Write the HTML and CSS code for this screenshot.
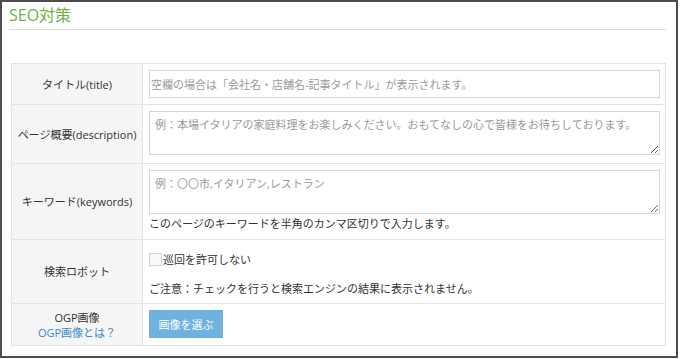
FILE: index.html
```html
<!DOCTYPE html>
<html lang="ja">
<head>
<meta charset="utf-8">
<title>SEO対策</title>
<link rel="stylesheet" href="styles.css">
</head>
<body>
<div class="frame">
  <h1 class="page-title">SEO対策</h1>
  <div class="form">
    <div class="label">タイトル(title)</div>
    <div class="field">
      <input class="text-input" type="text" placeholder="空欄の場合は「会社名・店舗名-記事タイトル」が表示されます。">
    </div>

    <div class="label">ページ概要(description)</div>
    <div class="field">
      <textarea class="textarea" placeholder="例：本場イタリアの家庭料理をお楽しみください。おもてなしの心で皆様をお待ちしております。"></textarea>
    </div>

    <div class="label">キーワード(keywords)</div>
    <div class="field">
      <textarea class="textarea" placeholder="例：〇〇市,イタリアン,レストラン"></textarea>
      <p class="help">このページのキーワードを半角のカンマ区切りで入力します。</p>
    </div>

    <div class="label">検索ロボット</div>
    <div class="field">
      <label class="check"><input class="checkbox" type="checkbox"><span>巡回を許可しない</span></label>
      <p class="note">ご注意：チェックを行うと検索エンジンの結果に表示されません。</p>
    </div>

    <div class="label label-stack">
      <span>OGP画像</span>
      <a class="link" href="#">OGP画像とは？</a>
    </div>
    <div class="field field-last">
      <button class="btn" type="button">画像を選ぶ</button>
    </div>
  </div>
</div>
</body>
</html>
```

FILE: styles.css
```css
html, body {
  margin: 0;
  padding: 0;
  background: #ffffff;
}

body {
  font-family: "Open Sans", "Noto Sans CJK JP", sans-serif;
  color: #333333;
}

.frame {
  box-sizing: border-box;
  width: 678px;
  height: 358px;
  border: 2px solid #4d4d4d;
  padding: 0 10px 0 7px;
  background: #ffffff;
}

.page-title {
  margin: 0;
  padding: 3px 0 4px 0;
  font-size: 16px;
  line-height: 20px;
  font-weight: 400;
  color: #6db33f;
  border-bottom: 1px solid #d5e7cb;
}

.form {
  margin: 33px 0 0 2px;
  display: grid;
  grid-template-columns: 131px 1fr;
  border-top: 1px solid #e3e3e3;
  border-left: 1px solid #e3e3e3;
  font-size: 11px;
}

.label,
.field {
  border-right: 1px solid #e3e3e3;
  border-bottom: 1px solid #e3e3e3;
}

.label {
  background: #f5f5f5;
  display: flex;
  flex-direction: column;
  align-items: center;
  justify-content: center;
  text-align: center;
  white-space: nowrap;
  line-height: 15px;
  color: #333333;
}

.field {
  padding: 6px 5px 6px 6px;
  background: #ffffff;
}

.field-last {
  padding-bottom: 7px;
}

.text-input,
.textarea {
  box-sizing: border-box;
  width: 100%;
  margin: 0;
  border: 1px solid #d6d6d6;
  background: #ffffff;
  font-family: "Open Sans", "Noto Sans CJK JP", sans-serif;
  font-size: 11px;
  color: #333333;
  display: block;
  outline: none;
}

.text-input {
  height: 28px;
  padding: 0 1px;
}

.textarea {
  height: 44px;
  padding: 4px 5px;
  line-height: 18px;
  margin-bottom: 2px;
}

.text-input::placeholder,
.textarea::placeholder {
  color: #9a9a9a;
  opacity: 1;
}

.help {
  margin: 0;
  line-height: 19px;
}

.field .textarea + .help {
  margin-top: -2px;
}

.check {
  display: flex;
  align-items: center;
  margin-top: 3px;
  height: 20px;
  font-size: 11px;
}

.checkbox {
  appearance: none;
  -webkit-appearance: none;
  box-sizing: border-box;
  width: 13px;
  height: 13px;
  margin: 0 1px 0 0;
  border: 1px solid #d0d0d0;
  background: #f9f9f9;
}

.note {
  margin: 11px 0 0 0;
  line-height: 17px;
}

.link {
  color: #3a88cc;
  text-decoration: none;
}

.btn {
  display: block;
  width: 74px;
  height: 28px;
  margin: 0;
  padding: 0;
  border: none;
  background: #6fb2df;
  color: #ffffff;
  font-family: "Open Sans", "Noto Sans CJK JP", sans-serif;
  font-size: 11px;
}
```
